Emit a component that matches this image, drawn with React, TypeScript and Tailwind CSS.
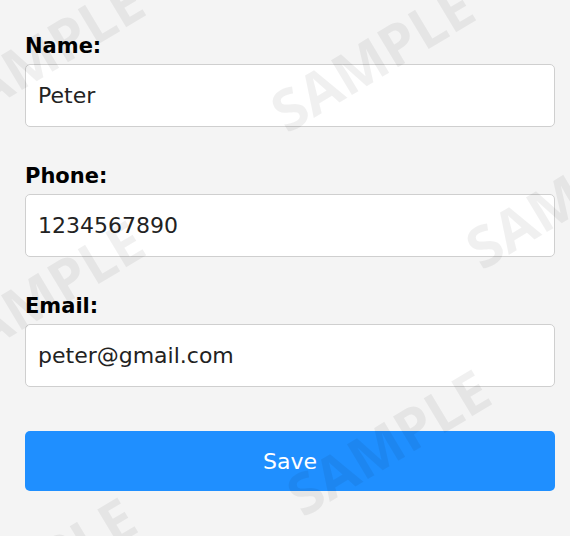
import React from "react";

const fields = [
  { label: "Name:", value: "Peter" },
  { label: "Phone:", value: "1234567890" },
  { label: "Email:", value: "peter@gmail.com" },
];

// watermark stamps, class names kept literal so tailwind picks them up
const marks = [
  "left-[42px] top-[53px]",
  "left-[372px] top-[58px]",
  "left-[567px] top-[195px]",
  "left-[42px] top-[293px]",
  "left-[388px] top-[442px]",
  "left-[34px] top-[570px]",
];

export default function App() {
  return (
    <main className="relative h-[536px] w-full overflow-hidden bg-[#f4f4f4] font-['DejaVu_Sans',sans-serif]">
      <form
        className="flex flex-col pl-[25px] pr-[15px] pt-[32px]"
        onSubmit={(e) => e.preventDefault()}
      >
        <div className="flex flex-col gap-[35px]">
          {fields.map((f) => (
            <div key={f.label} className="flex flex-col gap-[4px]">
              <label className="text-[21px] leading-[28px] font-bold text-black">
                {f.label}
              </label>
              <input
                defaultValue={f.value}
                className="h-[63px] w-full rounded-[5px] border border-[#cfcfcf] bg-white pl-3 text-[22px] text-[#222] outline-none"
              />
            </div>
          ))}
        </div>

        <button
          type="submit"
          className="mt-[44px] h-[60px] w-full rounded-[5px] bg-[#1f8fff] text-[22px] text-white"
        >
          Save
        </button>
      </form>

      {/* SAMPLE watermark */}
      {marks.map((pos) => (
        <span
          key={pos}
          className={
            "pointer-events-none absolute -translate-x-1/2 -translate-y-1/2 -rotate-[31deg] whitespace-nowrap font-['Open_Sans',sans-serif] text-[57px] leading-none font-bold text-black/[0.06] " +
            pos
          }
        >
          SAMPLE
        </span>
      ))}
    </main>
  );
}
